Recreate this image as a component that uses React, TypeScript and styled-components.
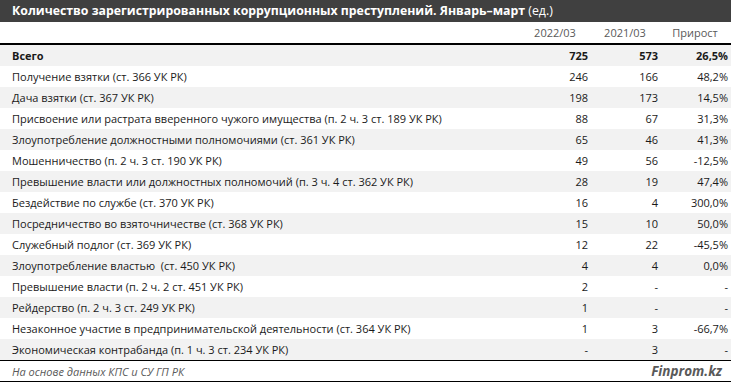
import React from 'react';
import styled, { createGlobalStyle } from 'styled-components';

const rows: [string, string, string, string][] = [
  ['Получение взятки (ст. 366 УК РК)', '246', '166', '48,2%'],
  ['Дача взятки (ст. 367 УК РК)', '198', '173', '14,5%'],
  ['Присвоение или растрата вверенного чужого имущества (п. 2 ч. 3 ст. 189 УК РК)', '88', '67', '31,3%'],
  ['Злоупотребление должностными полномочиями (ст. 361 УК РК)', '65', '46', '41,3%'],
  ['Мошенничество (п. 2 ч. 3 ст. 190 УК РК)', '49', '56', '-12,5%'],
  ['Превышение власти или должностных полномочий (п. 3 ч. 4 ст. 362 УК РК)', '28', '19', '47,4%'],
  ['Бездействие по службе (ст. 370 УК РК)', '16', '4', '300,0%'],
  ['Посредничество во взяточничестве (ст. 368 УК РК)', '15', '10', '50,0%'],
  ['Служебный подлог (ст. 369 УК РК)', '12', '22', '-45,5%'],
  ['Злоупотребление властью  (ст. 450 УК РК)', '4', '4', '0,0%'],
  ['Превышение власти (п. 2 ч. 2 ст. 451 УК РК)', '2', '-', '-'],
  ['Рейдерство (п. 2 ч. 3 ст. 249 УК РК)', '1', '-', '-'],
  ['Незаконное участие в предпринимательской деятельности (ст. 364 УК РК)', '1', '3', '-66,7%'],
  ['Экономическая контрабанда (п. 1 ч. 3 ст. 234 УК РК)', '-', '3', '-'],
];

function App() {
  return (
    <>
      <GlobalStyle />
      <Page>
        <TitleBar>
          Количество зарегистрированных коррупционных преступлений. Январь–март <Unit>(ед.)</Unit>
        </TitleBar>
        <HeaderRow>
          <span />
          <HeadCell>2022/03</HeadCell>
          <HeadCell>2021/03</HeadCell>
          <HeadCell>Прирост</HeadCell>
        </HeaderRow>
        <Row $shaded $bold>
          <Label>Всего</Label>
          <Num>725</Num>
          <Num>573</Num>
          <Num>26,5%</Num>
        </Row>
        {rows.map((r, i) => (
          <Row key={r[0]} $shaded={i % 2 === 1}>
            <Label>{r[0]}</Label>
            <Num>{r[1]}</Num>
            <Num>{r[2]}</Num>
            <Num>{r[3]}</Num>
          </Row>
        ))}
        <Footer>
          <Source>На основе данных КПС и СУ ГП РК</Source>
          <Brand>Finprom.kz</Brand>
        </Footer>
      </Page>
    </>
  );
}

const GlobalStyle = createGlobalStyle`
  body {
    margin: 0;
    background: #fff;
    font-family: 'Open Sans', 'Liberation Sans', sans-serif;
  }
`;

const Page = styled.div`
  width: 731px;
  height: 382px;
  overflow: hidden;
  color: #1a1a1a;
  font-size: 11px;
`;

const TitleBar = styled.div`
  height: 22px;
  background: #404040;
  color: #fff;
  font-size: 12.3px;
  font-weight: 700;
  line-height: 22px;
  padding-left: 12px;
  white-space: nowrap;
`;

const Unit = styled.span`
  font-weight: 400;
`;

const Grid = styled.div`
  display: grid;
  grid-template-columns: 1fr 70px 70px 70px;
  padding-right: 3px;
  align-items: center;
`;

const HeaderRow = styled(Grid)`
  height: 21px;
  border-bottom: 2px solid #000;
  color: #595959;
`;

const HeadCell = styled.span`
  text-align: center;
  padding-left: 4px;
`;

const Row = styled(Grid)<{ $shaded?: boolean; $bold?: boolean }>`
  height: 21px;
  background: ${(p) => (p.$shaded ? '#f2f2f2' : '#fff')};
  font-weight: ${(p) => (p.$bold ? 700 : 400)};
`;

const Label = styled.span`
  padding-left: 12px;
  white-space: pre;
`;

const Num = styled.span`
  text-align: right;
`;

const Footer = styled.div`
  height: 20px;
  border-top: 1px solid #000;
  border-bottom: 1px solid #000;
  display: flex;
  align-items: center;
  justify-content: space-between;
  padding: 0 9px 0 12px;
`;

const Source = styled.span`
  font-style: italic;
  font-size: 11px;
  color: #595959;
`;

const Brand = styled.span`
  font-style: italic;
  font-weight: 700;
  font-size: 13.5px;
  color: #595959;
`;

export default App;
